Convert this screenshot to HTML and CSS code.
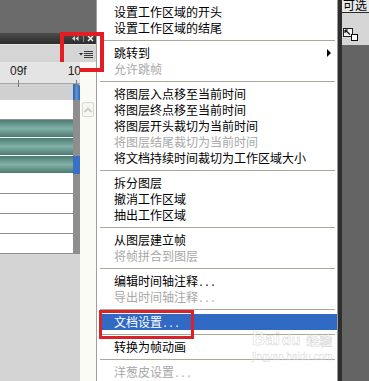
FILE: index.html
```html
<!DOCTYPE html>
<html lang="zh-CN">
<head>
<meta charset="utf-8">
<title>时间轴菜单</title>
<link rel="stylesheet" href="styles.css">
</head>
<body>
<div class="screen">
  <div class="left">
    <div class="doc"></div>
    <div class="titlebar">
      <svg width="22" height="7" viewBox="0 0 22 7"><path d="M3 1v5L0 3.5z M6.5 1v5L3.5 3.5z" fill="#d8d8d8"/><path d="M11.5 0v7" stroke="#8a8a8a"/><path d="M16 1l5 5M21 1l-5 5" stroke="#fff" stroke-width="1.4"/></svg>
    </div>
    <div class="optbar">
      <svg width="14" height="8" viewBox="0 0 14 8"><path d="M0 3h4l-2 2.5z" fill="#2a2a2a"/><path d="M5 1.5h9M5 3.5h9M5 5.5h9M5 7.5h9" stroke="#3a3a3a"/></svg>
    </div>
    <div class="panel">
      <div class="timeline">
        <div class="ruler">
          <span class="tick-label">09f</span>
          <span class="tick-label">10f</span>
        </div>
        <div class="band"><span class="marker"></span></div>
        <div class="rows">
          <div class="row"><div class="cell"></div><div class="gutter"></div></div>
          <div class="row teal"><div class="cell"></div><div class="gutter"></div></div>
          <div class="row teal"><div class="cell"></div><div class="gutter"></div></div>
          <div class="row teal sel"><div class="cell"></div><div class="gutter"></div></div>
          <div class="row"><div class="cell"></div><div class="gutter"></div></div>
          <div class="row"><div class="cell"></div><div class="gutter"></div></div>
          <div class="row"><div class="cell"></div><div class="gutter"></div></div>
          <div class="row"><div class="cell"></div><div class="gutter"></div></div>
        </div>
        <div class="rest"></div>
      </div>
      <div class="vscroll">
        <div class="upbtn">
          <svg width="10" height="6" viewBox="0 0 10 6"><path d="M1.5 5L5 1.5 8.5 5" fill="none" stroke="#c4c4bc" stroke-width="1.6"/></svg>
        </div>
      </div>
    </div>
  </div>

  <div class="menu">
    <div class="item">设置工作区域的开头</div>
    <div class="item">设置工作区域的结尾</div>
    <div class="sep"></div>
    <div class="item sub"><span>跳转到</span><span class="arrow"></span></div>
    <div class="item off">允许跳帧</div>
    <div class="sep"></div>
    <div class="item">将图层入点移至当前时间</div>
    <div class="item">将图层终点移至当前时间</div>
    <div class="item">将图层开头裁切为当前时间</div>
    <div class="item off">将图层结尾裁切为当前时间</div>
    <div class="item">将文档持续时间裁切为工作区域大小</div>
    <div class="sep"></div>
    <div class="item">拆分图层</div>
    <div class="item">撤消工作区域</div>
    <div class="item">抽出工作区域</div>
    <div class="sep"></div>
    <div class="item">从图层建立帧</div>
    <div class="item off">将帧拼合到图层</div>
    <div class="sep"></div>
    <div class="item">编辑时间轴注释<span class="dots">...</span></div>
    <div class="item off">导出时间轴注释<span class="dots">...</span></div>
    <div class="sep"></div>
    <div class="item active">文档设置<span class="dots">...</span></div>
    <div class="sep"></div>
    <div class="item">转换为帧动画</div>
    <div class="sep"></div>
    <div class="item off">洋葱皮设置<span class="dots">...</span></div>
  </div>

  <div class="shadow"></div>

  <div class="right">
    <div class="rtab"><span>可选</span></div>
    <div class="rtools">
      <svg width="15" height="13" viewBox="0 0 15 13"><rect x="0.5" y="0.5" width="9" height="8" fill="#f4f4f4" stroke="#222"/><path d="M2 2l5 4.5M2 2v3M2 2h3" fill="none" stroke="#111" stroke-width="1.2"/><rect x="8.5" y="6.5" width="6" height="6" fill="#fff" stroke="#111"/></svg>
    </div>
    <div class="rrest"></div>
  </div>

  <div class="annot-top"></div>

  <div class="wm">
    <div class="wm-top"><span>Bai</span><span class="wm-du">du</span><span class="wm-cn">经验</span></div>
    <div class="wm-url">jingyan.baidu.com</div>
  </div>
</div>
</body>
</html>
```

FILE: styles.css
```css
* { box-sizing: border-box; margin: 0; padding: 0; }
html, body { width: 369px; height: 381px; overflow: hidden; }
body {
  font-family: "Noto Sans CJK SC", "Noto Sans", sans-serif;
  font-size: 12px;
  background: #646464;
}
.screen {
  position: relative;
  display: flex;
  width: 369px;
  height: 381px;
}

/* ---------- left panel ---------- */
.left {
  width: 96px;
  flex: none;
  display: flex;
  flex-direction: column;
}
.doc { height: 33px; background: #6b6b6b; }
.titlebar {
  height: 11px;
  background: linear-gradient(#4c4c4c, #2c2c2c);
  display: flex;
  justify-content: flex-end;
  align-items: center;
  padding-right: 2px;
}
.optbar {
  height: 18px;
  background: #d5d5d5;
  border-top: 1px solid #e4e4e4;
  display: flex;
  justify-content: flex-end;
  align-items: center;
  padding-right: 3px;
}
.panel {
  flex: 1;
  display: flex;
}
.timeline {
  width: 80px;
  display: flex;
  flex-direction: column;
  overflow: hidden;
}
.ruler {
  position: relative;
  z-index: 1;
  height: 22px;
  background: #e4e4e4;
  border-bottom: 1px solid #a6a6a6;
  display: flex;
  align-items: flex-start;
  gap: 41px;
  padding: 2px 0 0 10px;
}
.tick-label {
  position: relative;
  font-family: "Liberation Sans", Arial, sans-serif;
  font-size: 12px;
  line-height: 14px;
  color: #1c1c1c;
  white-space: nowrap;
}
.tick-label::after {
  content: "";
  position: absolute;
  left: 8px;
  top: 16px;
  width: 1px;
  height: 7px;
  background: #7a7a7a;
}
.band {
  height: 16px;
  background: #d0d0d0;
  display: flex;
  justify-content: flex-end;
}
.marker {
  width: 7px;
  height: 16px;
  border-radius: 0 3px 0 0;
  background: linear-gradient(to right, #2b5ea6, #5d94d6 50%, #2f66b2);
}
.rows { display: flex; flex-direction: column; }
.row { display: flex; height: 20px; }
.cell {
  width: 73px;
  background: #fff;
  border-bottom: 1px solid #8e8e8e;
}
.gutter { width: 7px; background: #8e8e8e; }
.row.teal { height: 18px; }
.row.teal .cell {
  border-bottom: 1px solid #fff;
  background: linear-gradient(#4b7a70, #82b2a7 50%, #4b7a70);
}
.row.sel .gutter { background: #3a6fc9; }
.rest { flex: 1; background: #d4d4d4; }

.vscroll {
  width: 16px;
  background: #fbfbf5;
  padding: 40px 2px 0 2px;
}
.upbtn {
  width: 12px;
  height: 15px;
  border: 1px solid #d9d9d1;
  border-radius: 2px;
  background: #f7f7f1;
  display: flex;
  align-items: center;
  justify-content: center;
}

/* ---------- menu ---------- */
.menu {
  width: 242px;
  flex: none;
  background: #fff;
  border-left: 1px solid #a0a0a0;
  border-right: 1px solid #9a9a9a;
  padding-top: 4px;
  color: #000;
}
.item {
  height: 16px;
  line-height: 16px;
  padding-left: 17px;
  white-space: nowrap;
}
.item.off { color: #a8a8a8; }
.item.sub {
  display: flex;
  justify-content: space-between;
  align-items: center;
  padding-right: 6px;
}
.arrow {
  width: 0;
  height: 0;
  border-left: 4px solid #000;
  border-top: 4px solid transparent;
  border-bottom: 4px solid transparent;
}
.dots {
  font-family: "Liberation Mono", monospace;
  font-size: 10px;
}
.sep {
  height: 1px;
  background: #aca899;
  margin: 4px 2px 4px 3px;
}
.item.active {
  position: relative;
  margin-left: 3px;
  padding-left: 14px;
  background: #316ac5;
  color: #fff;
}
.item.active::after {
  content: "";
  position: absolute;
  left: -1px;
  top: -4px;
  width: 89px;
  height: 23px;
  border: 3px solid #d9232b;
}

.shadow { width: 4px; flex: none; background: #2e2e2e; }

/* ---------- right strip ---------- */
.right {
  width: 27px;
  flex: none;
  display: flex;
  flex-direction: column;
}
.rtab {
  height: 13px;
  background: #e8e8e8;
  border-bottom: 1px solid #2a2a2a;
  overflow: hidden;
  padding-left: 1px;
}
.rtab span {
  display: block;
  margin-top: -3px;
  line-height: 16px;
  white-space: nowrap;
  color: #000;
}
.rtools {
  height: 32px;
  background: #d6d6d6;
  padding: 14px 0 0 1px;
}
.rrest { flex: 1; background: #646464; }

/* ---------- overlays ---------- */
.annot-top {
  position: absolute;
  left: 60px;
  top: 32px;
  width: 44px;
  height: 40px;
  border: 4px solid #e51c23;
}
.wm {
  position: absolute;
  left: 252px;
  top: 328px;
  width: 90px;
  color: rgba(255, 255, 255, 0.55);
  -webkit-text-stroke: 0.6px rgba(160, 160, 160, 0.45);
  font-family: "Liberation Sans", Arial, sans-serif;
  pointer-events: none;
}
.wm-top {
  display: flex;
  align-items: baseline;
  gap: 2px;
  font-size: 18px;
  font-weight: bold;
  line-height: 22px;
}
.wm-du { font-size: 15px; }
.wm-cn {
  font-family: "Noto Sans CJK SC", sans-serif;
  font-size: 13px;
  margin-left: 4px;
}
.wm-url {
  font-size: 10px;
  line-height: 12px;
  -webkit-text-stroke: 0.4px rgba(160, 160, 160, 0.4);
}
```
